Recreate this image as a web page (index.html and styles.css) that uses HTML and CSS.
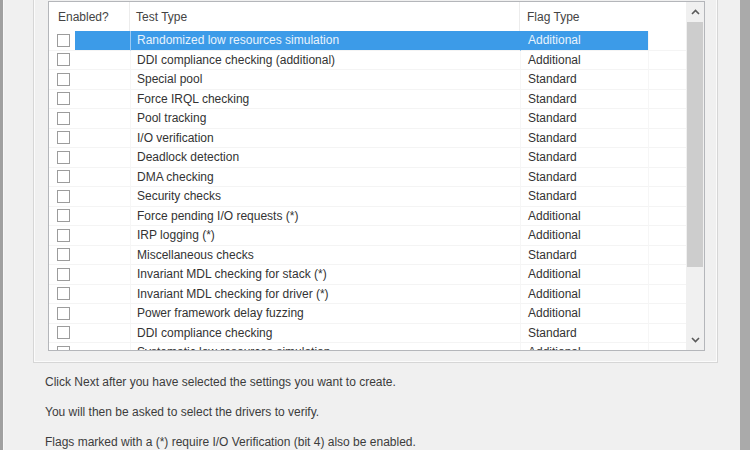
FILE: index.html
```
<!DOCTYPE html>
<html>
<head>
<meta charset="utf-8">
<link rel="stylesheet" href="styles.css">
</head>
<body>
<div class="screen">
  <div class="dialog">
    <div class="group">
      <div class="list">
        <div class="table">
          <div class="head">
            <span class="h h-en">Enabled?</span>
            <span class="h h-type">Test Type</span>
            <span class="h h-flag">Flag Type</span>
            <span class="h h-rest"></span>
          </div>
          <div class="rows">
            <div class="row sel"><span class="c-chk"><i class="box"></i></span><span class="c-pad"></span><span class="c-type">Randomized low resources simulation</span><span class="c-flag">Additional</span><span class="c-rest"></span></div>
            <div class="row"><span class="c-chk"><i class="box"></i></span><span class="c-pad"></span><span class="c-type">DDI compliance checking (additional)</span><span class="c-flag">Additional</span><span class="c-rest"></span></div>
            <div class="row"><span class="c-chk"><i class="box"></i></span><span class="c-pad"></span><span class="c-type">Special pool</span><span class="c-flag">Standard</span><span class="c-rest"></span></div>
            <div class="row"><span class="c-chk"><i class="box"></i></span><span class="c-pad"></span><span class="c-type">Force IRQL checking</span><span class="c-flag">Standard</span><span class="c-rest"></span></div>
            <div class="row"><span class="c-chk"><i class="box"></i></span><span class="c-pad"></span><span class="c-type">Pool tracking</span><span class="c-flag">Standard</span><span class="c-rest"></span></div>
            <div class="row"><span class="c-chk"><i class="box"></i></span><span class="c-pad"></span><span class="c-type">I/O verification</span><span class="c-flag">Standard</span><span class="c-rest"></span></div>
            <div class="row"><span class="c-chk"><i class="box"></i></span><span class="c-pad"></span><span class="c-type">Deadlock detection</span><span class="c-flag">Standard</span><span class="c-rest"></span></div>
            <div class="row"><span class="c-chk"><i class="box"></i></span><span class="c-pad"></span><span class="c-type">DMA checking</span><span class="c-flag">Standard</span><span class="c-rest"></span></div>
            <div class="row"><span class="c-chk"><i class="box"></i></span><span class="c-pad"></span><span class="c-type">Security checks</span><span class="c-flag">Standard</span><span class="c-rest"></span></div>
            <div class="row"><span class="c-chk"><i class="box"></i></span><span class="c-pad"></span><span class="c-type">Force pending I/O requests (*)</span><span class="c-flag">Additional</span><span class="c-rest"></span></div>
            <div class="row"><span class="c-chk"><i class="box"></i></span><span class="c-pad"></span><span class="c-type">IRP logging (*)</span><span class="c-flag">Additional</span><span class="c-rest"></span></div>
            <div class="row"><span class="c-chk"><i class="box"></i></span><span class="c-pad"></span><span class="c-type">Miscellaneous checks</span><span class="c-flag">Standard</span><span class="c-rest"></span></div>
            <div class="row"><span class="c-chk"><i class="box"></i></span><span class="c-pad"></span><span class="c-type">Invariant MDL checking for stack (*)</span><span class="c-flag">Additional</span><span class="c-rest"></span></div>
            <div class="row"><span class="c-chk"><i class="box"></i></span><span class="c-pad"></span><span class="c-type">Invariant MDL checking for driver (*)</span><span class="c-flag">Additional</span><span class="c-rest"></span></div>
            <div class="row"><span class="c-chk"><i class="box"></i></span><span class="c-pad"></span><span class="c-type">Power framework delay fuzzing</span><span class="c-flag">Additional</span><span class="c-rest"></span></div>
            <div class="row"><span class="c-chk"><i class="box"></i></span><span class="c-pad"></span><span class="c-type">DDI compliance checking</span><span class="c-flag">Standard</span><span class="c-rest"></span></div>
            <div class="row"><span class="c-chk"><i class="box"></i></span><span class="c-pad"></span><span class="c-type">Systematic low resources simulation</span><span class="c-flag">Additional</span><span class="c-rest"></span></div>
          </div>
        </div>
        <div class="scrollbar">
          <div class="sb-btn"><svg width="9" height="6" viewBox="0 0 9 6"><polyline points="1,5 4.5,1.5 8,5" fill="none" stroke="#5a5a5a" stroke-width="1.6"/></svg></div>
          <div class="sb-thumb"></div>
          <div class="sb-track"></div>
          <div class="sb-btn"><svg width="9" height="6" viewBox="0 0 9 6"><polyline points="1,1 4.5,4.5 8,1" fill="none" stroke="#5a5a5a" stroke-width="1.6"/></svg></div>
        </div>
      </div>
    </div>
    <p class="note">Click Next after you have selected the settings you want to create.</p>
    <p class="note">You will then be asked to select the drivers to verify.</p>
    <p class="note">Flags marked with a (*) require I/O Verification (bit 4) also be enabled.</p>
  </div>
</div>
</body>
</html>
```
FILE: styles.css
```
html, body {
  margin: 0;
  padding: 0;
}
body {
  width: 750px;
  height: 450px;
  overflow: hidden;
  background: #f0f0f0;
  font-family: "Liberation Sans", Arial, sans-serif;
  font-size: 12px;
  color: #3a3a3a;
}
.screen {
  display: flex;
  height: 450px;
  box-sizing: border-box;
  border-left: 3px solid #a0a0a0;
  border-right: 10px solid #aaaaaa;
}
.dialog {
  flex: 1;
  padding: 0 22px 0 7px;
  border-left: 1px solid #f8f8f8;
}
.group {
  margin-left: 22px;
  border: 1px solid #d6d6d6;
  border-top: none;
  box-shadow: inset 1px 0 #fbfbfb, inset -1px -1px #fbfbfb;
  padding: 1px 12px 11px 14px;
}
.list {
  display: flex;
  height: 350px;
  box-sizing: border-box;
  border: 1px solid #b4b6ba;
  background: #fff;
}
.table {
  flex: 1;
  overflow: hidden;
}
.head {
  display: grid;
  grid-template-columns: 81px 390px 128px 1fr;
  height: 29px;
  align-items: stretch;
}
.h {
  display: flex;
  align-items: center;
  border-right: 1px solid #ececec;
  color: #444;
}
.h-en { padding-left: 9px; }
.h-type { padding-left: 6px; }
.h-flag { padding-left: 7px; border-right: none; }
.h-rest { border-right: none; }
.row {
  display: grid;
  grid-template-columns: 26px 55px 390px 128px 1fr;
  height: 19.5px;
  line-height: 19.5px;
  color: #333;
}
.row > span {
  border-bottom: 1px solid #f4f4f4;
  box-sizing: border-box;
  white-space: nowrap;
  overflow: hidden;
}
.c-chk {
  display: flex;
  align-items: center;
}
.box {
  display: block;
  width: 13px;
  height: 13px;
  box-sizing: border-box;
  margin-left: 8px;
  border: 1px solid #9c9c9c;
  background: #fff;
}
.c-type {
  padding-left: 6px;
  border-left: 1px solid #f6f6f6;
}
.c-flag {
  padding-left: 7px;
  border-left: 1px solid #f6f6f6;
}
.c-rest {
  border-left: 1px solid #f6f6f6;
}
.row.sel .c-pad,
.row.sel .c-type,
.row.sel .c-flag {
  background: #3c9be8;
  color: #e8f3fd;
}
.row.sel .c-type {
  border-left-color: #9ccaf3;
}
.row.sel .c-flag {
  border-left-color: #3c9be8;
}
.scrollbar {
  width: 18px;
  display: flex;
  flex-direction: column;
  background: #f0f0f0;
}
.sb-btn {
  height: 20px;
  display: flex;
  align-items: center;
  justify-content: center;
}
.sb-thumb {
  height: 245px;
  margin: 0 1px;
  background: #cdcdcd;
}
.sb-track {
  flex: 1;
}
.note {
  margin: 0 0 0 12px;
  padding-left: 22px;
  line-height: 30px;
  color: #3c3c3c;
}
.note:first-of-type {
  margin-top: 4px;
}
```
